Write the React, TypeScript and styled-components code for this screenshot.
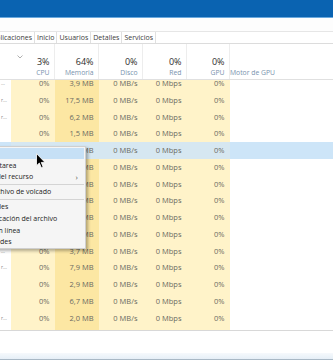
import React from 'react';
import styled, { createGlobalStyle } from 'styled-components';

const GlobalStyle = createGlobalStyle`
  html, body {
    margin: 0;
    padding: 0;
    background: #ffffff;
  }
  body {
    width: 333px;
    height: 360px;
    overflow: hidden;
    font-family: 'Open Sans', 'Noto Sans', sans-serif;
  }
`;

const COLS = '11px 44px 44px 44px 44px 43px 1fr';

type Tone = 'name' | 'light' | 'mem' | 'empty';

interface RowData {
  name: string;
  cpu: string;
  mem: string;
  selected?: boolean;
}

const rows: RowData[] = [
  { name: '…', cpu: '0%', mem: '3,9 MB' },
  { name: 'r…', cpu: '0%', mem: '17,5 MB' },
  { name: 'r…', cpu: '0%', mem: '6,2 MB' },
  { name: '', cpu: '0%', mem: '1,5 MB' },
  { name: '', cpu: '0%', mem: '2,4 MB', selected: true },
  { name: '', cpu: '0%', mem: '4,1 MB' },
  { name: '', cpu: '0%', mem: '5,3 MB' },
  { name: '', cpu: '0%', mem: '1,8 MB' },
  { name: '', cpu: '0%', mem: '3,2 MB' },
  { name: '', cpu: '0%', mem: '2,6 MB' },
  { name: '…', cpu: '0%', mem: '3,7 MB' },
  { name: 'r…', cpu: '0%', mem: '7,9 MB' },
  { name: '', cpu: '0%', mem: '2,9 MB' },
  { name: '', cpu: '0%', mem: '6,7 MB' },
  { name: 'r…', cpu: '0%', mem: '2,0 MB' },
  { name: '', cpu: '0%', mem: '1,1 MB' },
];

const tabs = [
  'Procesos',
  'Rendimiento',
  'Historial de aplicaciones',
  'Inicio',
  'Usuarios',
  'Detalles',
  'Servicios',
];

const menuItems = [
  { label: 'Expandir', highlight: true },
  { label: 'Finalizar tarea' },
  { label: 'Valores del recurso', sub: true },
  { sep: true },
  { label: 'Crear archivo de volcado' },
  { sep: true },
  { label: 'Ir a detalles' },
  { label: 'Abrir ubicación del archivo' },
  { label: 'Buscar en línea' },
  { label: 'Propiedades' },
];

const App = () => {
  return (
    <>
      <GlobalStyle />
      <Window>
        <TitleBar />
        <MenuBar />
        <TabStrip>
          <TabViewport>
            {tabs.map((t) => (
              <Tab key={t}>{t}</Tab>
            ))}
          </TabViewport>
        </TabStrip>

        <Header>
          <HeadCell />
          <HeadCell>
            <SortArrow width="6" height="4" viewBox="0 0 6 4">
              <polyline points="0.5,0.5 3,3 5.5,0.5" fill="none" stroke="#9a9a9a" strokeWidth="0.8" />
            </SortArrow>
            <Pct>3%</Pct>
            <Label>CPU</Label>
          </HeadCell>
          <HeadCell $sep>
            <Pct>64%</Pct>
            <Label>Memoria</Label>
          </HeadCell>
          <HeadCell $sep>
            <Pct>0%</Pct>
            <Label>Disco</Label>
          </HeadCell>
          <HeadCell $sep>
            <Pct>0%</Pct>
            <Label>Red</Label>
          </HeadCell>
          <HeadCell $sep>
            <Pct>0%</Pct>
            <Label>GPU</Label>
          </HeadCell>
          <HeadCell $sep $left>
            <Pct />
            <Label>Motor de GPU</Label>
          </HeadCell>
        </Header>

        <Body>
          <Rows>
            {rows.map((r, i) => (
              <Row key={i}>
                <NameCell $tone="name" $selected={r.selected}>
                  {r.name}
                </NameCell>
                <Cell $tone="light" $selected={r.selected}>{r.cpu}</Cell>
                <Cell $tone="mem" $selected={r.selected}>{r.mem}</Cell>
                <Cell $tone="light" $selected={r.selected}>0 MB/s</Cell>
                <Cell $tone="light" $selected={r.selected}>0 Mbps</Cell>
                <Cell $tone="light" $selected={r.selected}>0%</Cell>
                <Cell $tone="empty" $selected={r.selected} />
              </Row>
            ))}
          </Rows>
        </Body>

        <Spacer />
        <StatusBand />

        <ContextMenu>
          {menuItems.map((m, i) =>
            m.sep ? (
              <Separator key={i} />
            ) : (
              <MenuItem key={i} $highlight={m.highlight}>
                <span>{m.label}</span>
                {m.sub && <SubArrow>›</SubArrow>}
              </MenuItem>
            )
          )}
        </ContextMenu>

        <Cursor width="10" height="16" viewBox="0 0 12 19">
          <path
            d="M0.6 0.6 L0.6 15.2 L4 11.9 L6.4 17.6 L8.6 16.7 L6.3 11.2 L10.8 11.2 Z"
            fill="#000"
            stroke="#fff"
            strokeWidth="1"
            strokeLinejoin="round"
          />
        </Cursor>
      </Window>
    </>
  );
};

const Window = styled.div`
  position: relative;
  width: 333px;
  height: 360px;
  overflow: hidden;
  display: flex;
  flex-direction: column;
  background: #ffffff;
`;

const TitleBar = styled.div`
  height: 17px;
  flex-shrink: 0;
  background: #0a63b1;
  border-bottom: 1px solid #6aa9de;
`;

const MenuBar = styled.div`
  height: 13px;
  flex-shrink: 0;
  background: #fdfdfd;
  border-bottom: 1px solid #e6e6e6;
`;

const TabStrip = styled.div`
  height: 11px;
  flex-shrink: 0;
  display: flex;
  border-bottom: 1px solid #dcdcdc;
`;

const TabViewport = styled.div`
  width: 156px;
  display: flex;
  justify-content: flex-end;
  overflow: hidden;
`;

const Tab = styled.div`
  flex-shrink: 0;
  padding: 0 2px;
  font-size: 7px;
  line-height: 11px;
  color: #3c3c3c;
  white-space: nowrap;
  border-right: 1px solid #e0e0e0;
`;

const Header = styled.div`
  height: 35px;
  flex-shrink: 0;
  display: grid;
  grid-template-columns: ${COLS};
  border-bottom: 1px solid #e0e0e0;
`;

const HeadCell = styled.div<{ $sep?: boolean; $left?: boolean }>`
  position: relative;
  display: flex;
  flex-direction: column;
  align-items: ${(p) => (p.$left ? 'flex-start' : 'flex-end')};
  padding: 12px ${(p) => (p.$left ? '0' : '5.5px')} 0 0;
  border-left: ${(p) => (p.$sep ? '1px solid #ededed' : 'none')};
  margin-left: ${(p) => (p.$sep ? '-1px' : '0')};
`;

const SortArrow = styled.svg`
  position: absolute;
  left: 6px;
  top: 11px;
`;

const Pct = styled.div`
  height: 11px;
  font-size: 9px;
  line-height: 11px;
  color: #2c2c2c;
`;

const Label = styled.div`
  margin-top: 1px;
  font-size: 6.8px;
  line-height: 9px;
  color: #7892ad;
  white-space: nowrap;
`;

const Body = styled.div`
  height: 250px;
  flex-shrink: 0;
  overflow: hidden;
  border-bottom: 1px solid #d8d8d8;
`;

const Rows = styled.div`
  margin-top: -5px;
  display: flex;
  flex-direction: column;
`;

const Row = styled.div`
  height: 16.75px;
  display: grid;
  grid-template-columns: ${COLS};
`;

const toneBg = (tone: Tone, selected?: boolean) => {
  if (selected) return tone === 'name' || tone === 'empty' ? '#cde5f8' : '#d6e7f1';
  if (tone === 'light') return '#fff3c9';
  if (tone === 'mem') return '#fce7a3';
  return '#ffffff';
};

const Cell = styled.div<{ $tone: Tone; $selected?: boolean }>`
  background: ${(p) => toneBg(p.$tone, p.$selected)};
  font-size: 7.5px;
  line-height: 16.75px;
  text-align: right;
  padding-right: 5.5px;
  color: #6a6a62;
  white-space: nowrap;
`;

const NameCell = styled(Cell)`
  text-align: left;
  padding: 0 0 0 1px;
  font-size: 5px;
  color: #8c8c8c;
`;

const Spacer = styled.div`
  height: 22px;
  flex-shrink: 0;
`;

const StatusBand = styled.div`
  height: 6px;
  flex-shrink: 0;
  background: linear-gradient(#f6f9fc, #e6eff7);
  border-bottom: 1px solid #a9b8c5;
`;

const ContextMenu = styled.div`
  position: absolute;
  left: -42px;
  top: 146px;
  width: 124px;
  padding: 0.5px 1px;
  background: #f5f5f5;
  border: 1px solid #cfcfcf;
  box-shadow: 2px 2px 3px rgba(0, 0, 0, 0.3);
  display: flex;
  flex-direction: column;
`;

const MenuItem = styled.div<{ $highlight?: boolean }>`
  height: 11.8px;
  display: flex;
  align-items: center;
  justify-content: space-between;
  padding: 0 6px 0 10.5px;
  font-size: 7px;
  color: #1b1b1b;
  white-space: nowrap;
  background: ${(p) => (p.$highlight ? '#c6e0f6' : 'transparent')};
`;

const SubArrow = styled.span`
  font-size: 8px;
  color: #555;
`;

const Separator = styled.div`
  height: 3px;
  display: flex;
  align-items: center;
  &::after {
    content: '';
    flex: 1;
    height: 1px;
    background: #d4d4d4;
    margin-left: 40px;
  }
`;

const Cursor = styled.svg`
  position: absolute;
  left: 35.5px;
  top: 152.5px;
`;

export default App;
